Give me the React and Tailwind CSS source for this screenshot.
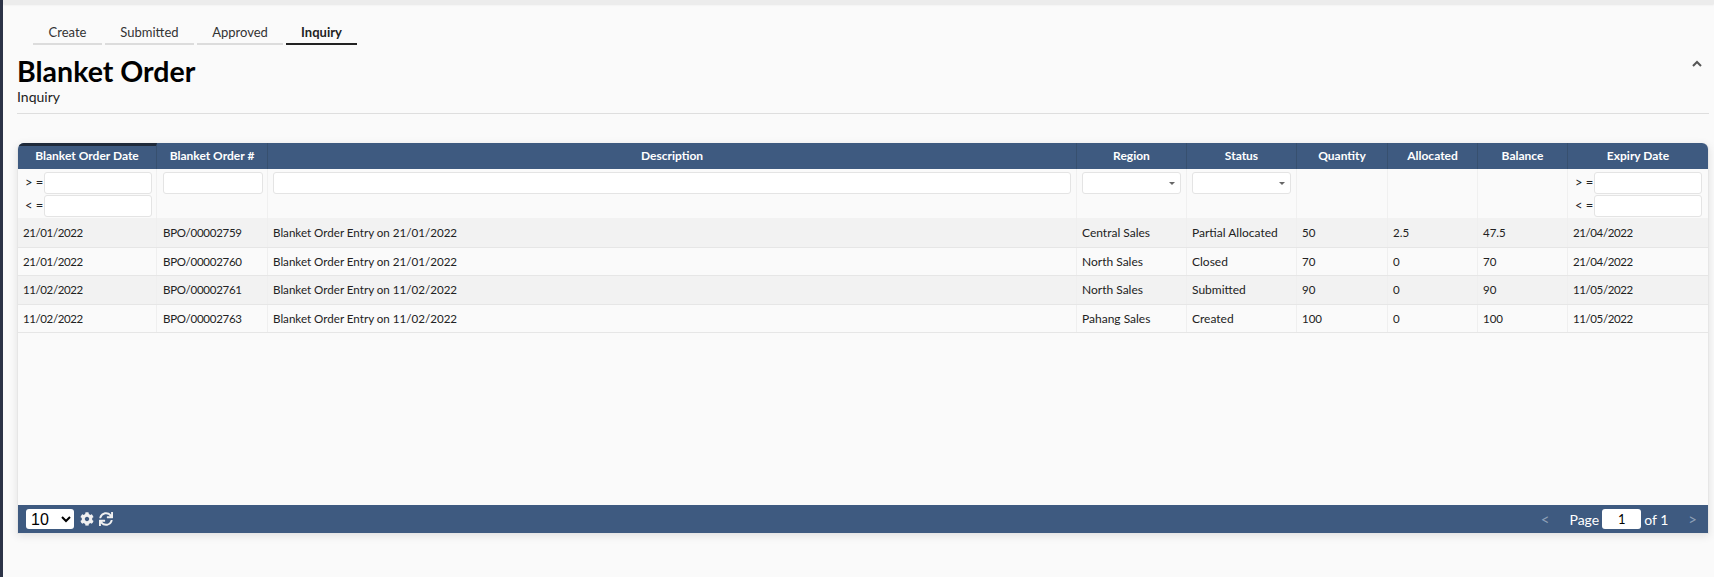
import { FaCog, FaSync } from "react-icons/fa";

const cols = "grid grid-cols-[139px_111px_809px_110px_110px_91px_90px_90px_140px]";

const headers = [
  "Blanket Order Date",
  "Blanket Order #",
  "Description",
  "Region",
  "Status",
  "Quantity",
  "Allocated",
  "Balance",
  "Expiry Date",
];

// the digits in the reference run narrower than Lato's, so each column gets its own tracking
const cellText = [
  "pl-[5px] text-[11.5px] tracking-[-0.4px]",
  "pl-[6px] text-[11.5px] tracking-[-0.27px]",
  "pl-[5px] text-[11.6px]",
  "pl-[5px] text-[12px]",
  "pl-[5px] text-[12px]",
  "pl-[5px] text-[11.5px]",
  "pl-[5px] text-[11.5px]",
  "pl-[5px] text-[11.5px]",
  "pl-[5px] text-[11.5px] tracking-[-0.4px]",
];

const rows = [
  { h: "h-[30px]", bg: "bg-[#f2f2f2]", cells: ["21/01/2022", "BPO/00002759", "Blanket Order Entry on 21/01/2022", "Central Sales", "Partial Allocated", "50", "2.5", "47.5", "21/04/2022"] },
  { h: "h-[28px]", bg: "bg-[#fafafa]", cells: ["21/01/2022", "BPO/00002760", "Blanket Order Entry on 21/01/2022", "North Sales", "Closed", "70", "0", "70", "21/04/2022"] },
  { h: "h-[29px]", bg: "bg-[#f2f2f2]", cells: ["11/02/2022", "BPO/00002761", "Blanket Order Entry on 11/02/2022", "North Sales", "Submitted", "90", "0", "90", "11/05/2022"] },
  { h: "h-[28px]", bg: "bg-[#fafafa]", cells: ["11/02/2022", "BPO/00002763", "Blanket Order Entry on 11/02/2022", "Pahang Sales", "Created", "100", "0", "100", "11/05/2022"] },
];

const tabs = [
  { label: "Create", w: "w-[69px]" },
  { label: "Submitted", w: "w-[89px]" },
  { label: "Approved", w: "w-[86px]" },
  { label: "Inquiry", w: "w-[71px]", active: true },
];

const Box = ({ className = "" }) => (
  <div className={"h-[22px] bg-white border border-[#e4e4e4] rounded-[3px] " + className} />
);

const DateFilter = () => (
  <div className="flex flex-col gap-[1px] pt-[3px]">
    {["> =", "< ="].map((op) => (
      <div key={op} className="flex items-center">
        <span className="w-[26px] pl-[7px] text-[13px] text-[#222] whitespace-nowrap">{op}</span>
        <Box className="w-[108px]" />
      </div>
    ))}
  </div>
);

const SelectFilter = () => (
  <div className="pt-[3px] pl-[5px]">
    <div className="h-[22px] w-[99px] bg-white border border-[#e4e4e4] rounded-[3px] flex items-center justify-end pr-[5px]">
      <span className="w-0 h-0 border-x-[3px] border-x-transparent border-t-[3px] border-t-[#666]" />
    </div>
  </div>
);

const FilterCell = ({ children }) => (
  <div className="h-[49px] border-r border-[#f0f0f0] last:border-r-0">{children}</div>
);

export default function App() {
  return (
    <div className="flex h-[577px] bg-[#fafafa] font-['Lato',sans-serif] overflow-hidden">
      <div className="w-[3px] shrink-0 bg-[#2c3347]" />
      <div className="flex-1 min-w-0">
        <div className="h-[4px] bg-[#ececec] shadow-[0_1px_2px_rgba(0,0,0,0.08)]" />

        <div className="flex gap-[3px] pl-[30px] pt-[14px]">
          {tabs.map((t) => (
            <div
              key={t.label}
              className={
                t.active
                  ? t.w + " h-[27px] pt-[1px] text-center text-[13px] leading-[26px] font-bold text-[#222] border-b-2 border-[#222]"
                  : t.w + " h-[27px] pt-[1px] text-center text-[13px] leading-[26px] text-[#333] border-b-2 border-[#dcdcdc]"
              }
            >
              {t.label}
            </div>
          ))}
        </div>

        <div className="relative ml-[14px] mr-[5px] h-[69px] border-b border-[#dedede]">
          <h1 className="pt-[9px] text-[28.5px] leading-[34px] font-bold text-black">Blanket Order</h1>
          <div className="text-[14px] leading-[17px] text-[#222]">Inquiry</div>
          <svg className="absolute right-[7px] top-[15px]" width="10" height="8" viewBox="0 0 10 8">
            <path d="M1 6 L5 2 L9 6" fill="none" stroke="#555" strokeWidth="2" />
          </svg>
        </div>

        <div className="ml-[14px] mt-[29px] w-[1690px] h-[390px] flex flex-col border border-t-0 border-[#e6e6e6] box-content shadow-[0_2px_8px_rgba(0,0,0,0.1)] rounded-t-[6px]">
          <div className={cols + " h-[26px] bg-[#3e5a80] rounded-t-[6px] overflow-hidden"}>
            {headers.map((h, i) => (
              <div
                key={h}
                className={
                  i === 0
                    ? "border-t-[3px] border-t-[#1f2a3a] border-r border-r-[#37506f] text-center text-white text-[12px] font-bold leading-[20px]"
                    : "border-r border-r-[#37506f] last:border-r-0 text-center text-white text-[12px] font-bold leading-[26px]"
                }
              >
                {h}
              </div>
            ))}
          </div>

          <div className={cols + " bg-[#fafafa]"}>
            <FilterCell><DateFilter /></FilterCell>
            <FilterCell>
              <div className="pt-[3px] pl-[6px] pr-[4px]"><Box /></div>
            </FilterCell>
            <FilterCell>
              <div className="pt-[3px] px-[5px]"><Box /></div>
            </FilterCell>
            <FilterCell><SelectFilter /></FilterCell>
            <FilterCell><SelectFilter /></FilterCell>
            <FilterCell />
            <FilterCell />
            <FilterCell />
            <FilterCell><DateFilter /></FilterCell>
          </div>

          {rows.map((r) => (
            <div key={r.cells[1]} className={cols + " " + r.h + " " + r.bg + " border-b border-[#e6e6e6]"}>
              {r.cells.map((c, i) => (
                <div key={i} className={"border-r border-[#efefef] last:border-r-0 text-[#222] flex items-center whitespace-nowrap " + cellText[i]}>
                  {c}
                </div>
              ))}
            </div>
          ))}

          <div className="flex-1 bg-[#fafafa]" />

          <div className="h-[28px] bg-[#3e5a80] flex items-center pl-[8px] pr-[11px] text-white">
            <select className="h-[20px] w-[48px] bg-white text-black rounded-[3px] text-[16px] font-['Liberation_Sans',sans-serif] pl-[1px]">
              <option>10</option>
            </select>
            <FaCog className="ml-[6px] text-[14px] text-[#f0f0f0]" />
            <FaSync className="ml-[5px] text-[14px] text-[#f0f0f0]" />
            <div className="ml-auto flex items-center text-[14px]">
              <span className="text-[#8fa1b8] text-[15px] mr-[20px]">&lt;</span>
              <span>Page</span>
              <div className="mx-[3px] w-[39px] h-[20px] bg-white rounded-[3px] text-black text-center text-[13px] leading-[20px]">1</div>
              <span>of 1</span>
              <span className="text-[#8fa1b8] text-[15px] ml-[20px]">&gt;</span>
            </div>
          </div>
        </div>
      </div>
    </div>
  );
}
